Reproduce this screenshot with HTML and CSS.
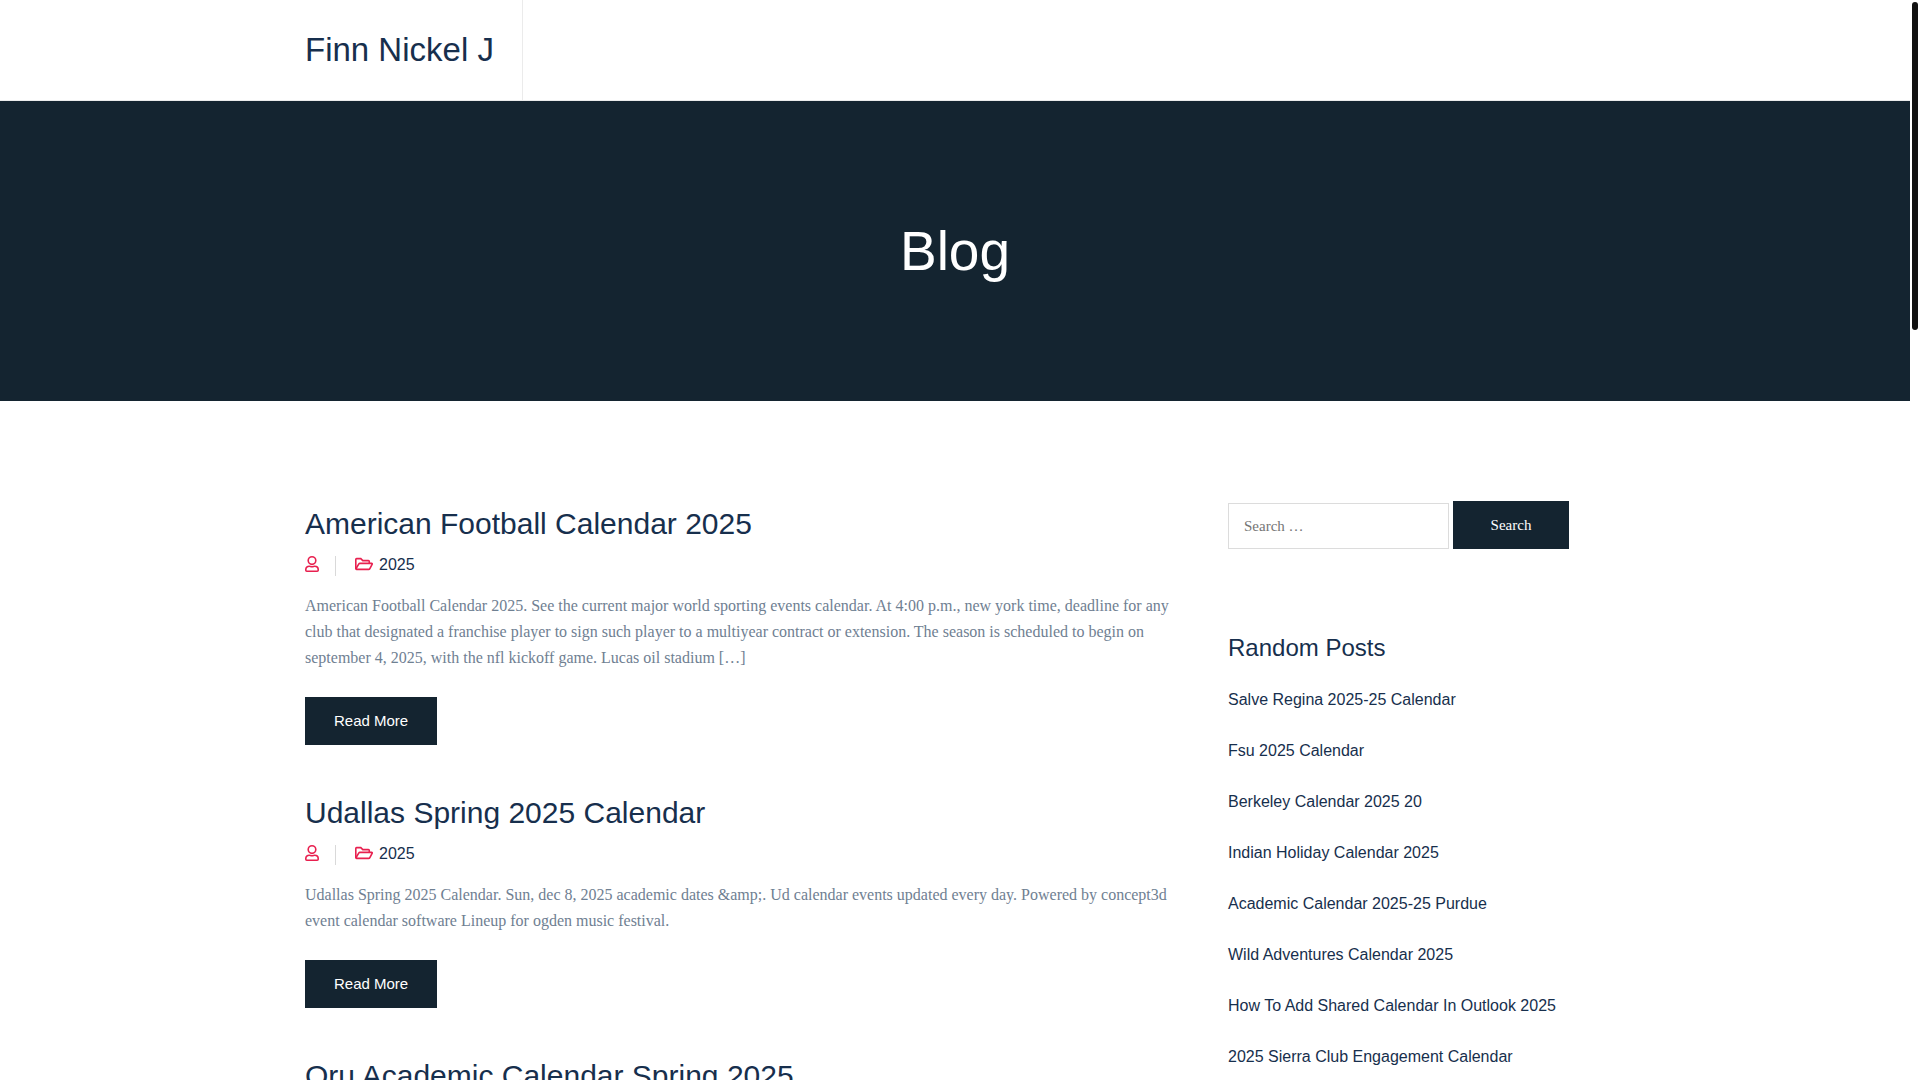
FILE: index.html
```html
<!DOCTYPE html>
<html lang="en">
<head>
    <meta charset="UTF-8">
    <meta name="viewport" content="width=device-width, initial-scale=1.0">
    <title>Blog - Finn Nickel J</title>
    <link rel="stylesheet" href="styles.css">
</head>
<body>

    <!-- Shared icons -->
    <svg class="icon-defs" aria-hidden="true">
        <symbol id="icon-user" viewBox="0 0 14 16">
            <circle cx="7" cy="4.6" r="3.8"/>
            <path d="M4.3 10.2C2.2 10.2 0.8 11.6 0.8 13.5V14.2C0.8 14.8 1.1 15.2 1.8 15.2H12.2C12.9 15.2 13.2 14.8 13.2 14.2V13.5C13.2 11.6 11.8 10.2 9.7 10.2C8.8 10.2 8.3 10.7 7 10.7S5.2 10.2 4.3 10.2Z"/>
        </symbol>
        <symbol id="icon-folder" viewBox="0 0 18 16">
            <path d="M0.8 13V3.4C0.8 2.9 1.2 2.6 1.6 2.6H5.8L7.8 4.6H13.4C13.9 4.6 14.3 5 14.3 5.4V7.4"/>
            <path d="M4.9 7.4H16.6C17.2 7.4 17.4 7.8 17.1 8.3L14.7 12.8C14.5 13.2 14.1 13.4 13.7 13.4H1.6C1 13.4 0.8 13 1.1 12.5L3.7 8.1C4 7.6 4.4 7.4 4.9 7.4Z"/>
        </symbol>
    </svg>

    <div class="page">
        <header class="site-header">
            <div class="container">
                <a class="site-title" href="#">Finn Nickel J</a>
            </div>
        </header>

        <section class="page-banner">
            <h1>Blog</h1>
        </section>

        <div class="container content">
            <main class="posts">
                <article class="post">
                    <h2><a href="#">American Football Calendar 2025</a></h2>
                    <div class="post-meta">
                        <span class="meta-author"><svg class="icon-user"><use href="#icon-user"/></svg></span>
                        <span class="meta-category"><svg class="icon-folder"><use href="#icon-folder"/></svg><a href="#">2025</a></span>
                    </div>
                    <p>American Football Calendar 2025. See the current major world sporting events calendar. At 4:00 p.m., new york time, deadline for any club that designated a franchise player to sign such player to a multiyear contract or extension. The season is scheduled to begin on september 4, 2025, with the nfl kickoff game. Lucas oil stadium […]</p>
                    <a class="read-more" href="#">Read More</a>
                </article>

                <article class="post">
                    <h2><a href="#">Udallas Spring 2025 Calendar</a></h2>
                    <div class="post-meta">
                        <span class="meta-author"><svg class="icon-user"><use href="#icon-user"/></svg></span>
                        <span class="meta-category"><svg class="icon-folder"><use href="#icon-folder"/></svg><a href="#">2025</a></span>
                    </div>
                    <p>Udallas Spring 2025 Calendar. Sun, dec 8, 2025 academic dates &amp;amp;. Ud calendar events updated every day. Powered by concept3d event calendar software Lineup for ogden music festival.</p>
                    <a class="read-more" href="#">Read More</a>
                </article>

                <article class="post">
                    <h2><a href="#">Oru Academic Calendar Spring 2025</a></h2>
                </article>
            </main>

            <aside class="sidebar">
                <form class="search-form">
                    <input type="search" placeholder="Search …" aria-label="Search for">
                    <button type="submit">Search</button>
                </form>

                <h3>Random Posts</h3>
                <ul class="random-posts">
                    <li><a href="#">Salve Regina 2025-25 Calendar</a></li>
                    <li><a href="#">Fsu 2025 Calendar</a></li>
                    <li><a href="#">Berkeley Calendar 2025 20</a></li>
                    <li><a href="#">Indian Holiday Calendar 2025</a></li>
                    <li><a href="#">Academic Calendar 2025-25 Purdue</a></li>
                    <li><a href="#">Wild Adventures Calendar 2025</a></li>
                    <li><a href="#">How To Add Shared Calendar In Outlook 2025</a></li>
                    <li><a href="#">2025 Sierra Club Engagement Calendar</a></li>
                </ul>
            </aside>
        </div>
    </div>

    <!-- Custom scrollbar -->
    <div class="scroll-thumb"></div>

</body>
</html>
```

FILE: styles.css
```css
* {
    box-sizing: border-box;
}

body {
    margin: 0;
    font-family: "Liberation Serif", serif;
    font-size: 16px;
    line-height: 26px;
    color: #6f8092;
    background-color: #fff;
}

a {
    color: #172f4d;
    text-decoration: none;
}

h1, h2, h3, p, ul {
    margin: 0;
    padding: 0;
}

h1, h2, h3 {
    font-family: "Liberation Sans", sans-serif;
    font-weight: 400;
    color: #172f4d;
}

.icon-defs {
    display: none;
}

.page {
    height: 100vh;
    margin-right: 10px;
    overflow: hidden;
}

.container {
    width: 100%;
    max-width: 1300px;
    margin: 0 auto;
}

/* Header */
.site-header {
    border-bottom: 1px solid #ebebeb;
}

.site-title {
    display: inline-block;
    padding-right: 28px;
    border-right: 1px solid #ebebeb;
    font-family: "Liberation Sans", sans-serif;
    font-size: 33px;
    line-height: 100px;
    vertical-align: top;
}

.page-banner {
    display: flex;
    justify-content: center;
    align-items: center;
    height: 300px;
    background-color: #142430;
}

.page-banner h1 {
    font-size: 55px;
    line-height: 66px;
    color: #fff;
}

/* Content */
.content {
    display: flex;
    gap: 55px;
    padding-top: 100px;
}

.posts {
    flex: 1;
    min-width: 0;
}

.post {
    margin-bottom: 45px;
}

.post h2 {
    margin-bottom: 5px;
    font-size: 30px;
    line-height: 46px;
}

.post-meta {
    display: flex;
    height: 26px;
    padding-top: 4px;
    margin-bottom: 15px;
    font-family: "Liberation Sans", sans-serif;
    line-height: 18px;
}

.post-meta svg {
    height: 16px;
    fill: none;
    stroke: #e8204f;
    stroke-width: 1.6;
}

.icon-user {
    width: 14px;
}

.icon-folder {
    width: 18px;
}

.meta-author,
.meta-category {
    display: flex;
    align-items: flex-start;
    height: 20px;
}

.meta-author {
    padding-right: 16px;
    margin-right: 19px;
    border-right: 1px solid #d9d9d9;
}

.meta-category {
    gap: 6px;
}

.post p {
    margin-bottom: 26px;
}

.read-more {
    display: block;
    width: fit-content;
    padding: 0 29px;
    font-family: "Liberation Sans", sans-serif;
    font-size: 15px;
    line-height: 48px;
    color: #fff;
    background-color: #142430;
}

/* Sidebar */
.sidebar {
    width: 29%;
}

.search-form {
    display: flex;
    align-items: flex-end;
    gap: 4px;
    margin-bottom: 80px;
}

.search-form input {
    width: 221px;
    height: 46px;
    padding: 0 15px;
    border: 1px solid #dcdcdc;
    border-radius: 0;
    font-family: inherit;
    font-size: 15px;
    background-color: #fff;
}

.search-form button {
    width: 116px;
    height: 48px;
    border: 0;
    font-family: inherit;
    font-size: 15px;
    color: #fff;
    background-color: #142430;
    cursor: pointer;
}

.sidebar h3 {
    margin-bottom: 20px;
    font-size: 24px;
    line-height: 38px;
}

.random-posts {
    list-style: none;
    font-family: "Liberation Sans", sans-serif;
}

.random-posts li {
    margin-bottom: 25px;
}

/* Scrollbar */
.scroll-thumb {
    position: fixed;
    top: 2px;
    right: 2px;
    width: 6px;
    height: 328px;
    border-radius: 3px;
    background-color: #111;
}
```
